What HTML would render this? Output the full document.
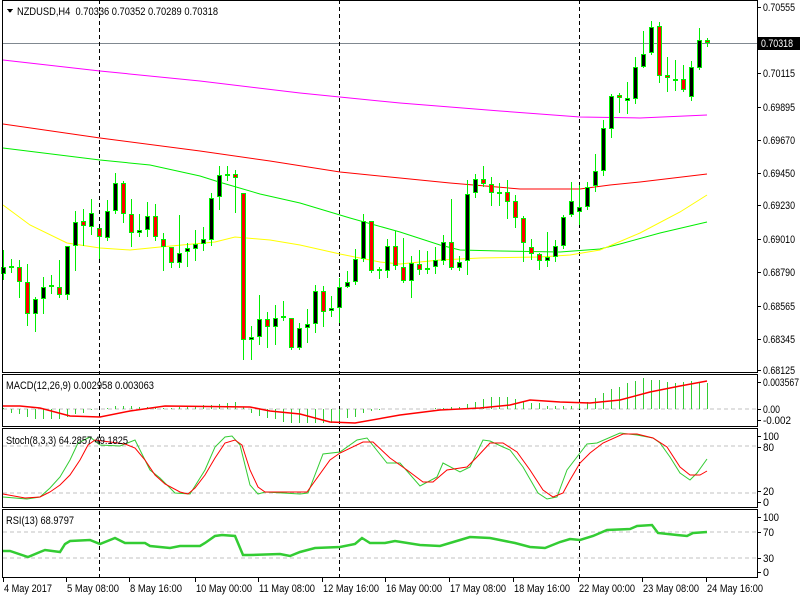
<!DOCTYPE html>
<html><head><meta charset="utf-8"><style>
html,body{margin:0;padding:0;background:#fff;width:800px;height:600px;overflow:hidden}
svg{display:block}
text{font-family:"Liberation Sans",sans-serif;font-size:11px;fill:#000}
</style></head><body>
<svg id="s" width="800" height="600" xmlns="http://www.w3.org/2000/svg" shape-rendering="crispEdges">
<rect width="800" height="600" fill="#fff"/>
<g id="grid"></g>
<g id="ma" fill="none" stroke-width="1.3" shape-rendering="auto"></g>
<g id="cd"></g>
<g id="ind" fill="none" shape-rendering="auto"></g>
<g id="fr" fill="none" stroke="#000"></g>
<g id="tx"></g>
</svg>
<script>
const NS="http://www.w3.org/2000/svg";
function el(p,t,a,txt){const e=document.createElementNS(NS,t);for(const k in a)e.setAttribute(k,a[k]);if(txt!==undefined)e.textContent=txt;document.getElementById(p).appendChild(e);return e;}
function pl(p,pts,c,w){el(p,'polyline',{points:pts.map(q=>q.join(',')).join(' '),stroke:c,'stroke-width':w||1,fill:'none'});}
const G='grid';
[409,446,493,532,558].forEach(y=>el(G,'line',{x1:3,x2:757,y1:y,y2:y,stroke:'#c0c0c0','stroke-dasharray':'4,3'}));
el(G,'line',{x1:3,x2:757,y1:43.5,y2:43.5,stroke:'#808890'});
[99,339,579].forEach(x=>el(G,'line',{x1:x+0.5,x2:x+0.5,y1:0,y2:578,stroke:'#000','stroke-dasharray':'4,3'}));
pl('ma',[[3,60],[100,71],[200,81],[300,93],[400,103],[500,111],[580,117],[640,118],[707,115]],'#ff00ff');
pl('ma',[[3,124],[100,138],[200,151],[270,161],[340,172],[400,178],[450,183],[520,189],[580,189],[610,185],[640,182],[707,174]],'#ff0000');
pl('ma',[[3,148],[100,160],[150,165],[200,176],[219,182],[260,194],[300,203],[350,218],[400,232],[440,245],[460,250],[500,251],[560,252],[600,249],[620,244],[660,233],[707,222]],'#00ee00');
pl('ma',[[3,205],[30,225],[67,243],[100,248],[130,250],[160,247],[215,242],[235,237],[270,240],[300,245],[340,254],[380,262],[400,264],[440,260],[480,258],[540,257],[570,255],[600,250],[640,233],[680,212],[707,195]],'#ffff00');
const C=[[250,267,274,280,'b'],[259,267,267,273,'d'],[260,267,282,298,'r'],[264,282,314,326,'r'],[297,299,314,332,'b'],[277,287,299,314,'b'],[275,286,286,294,'d'],[260,287,295,298,'r'],[246,246,295,300,'b'],[211,222,246,271,'b'],[209,221,226,246,'r'],[199,213,227,235,'b'],[228,228,237,259,'r'],[200,211,238,241,'b'],[173,183,211,214,'b'],[181,183,214,223,'r'],[199,214,233,247,'r'],[214,230,233,237,'b'],[202,216,230,237,'b'],[204,216,237,241,'r'],[233,239,247,271,'r'],[247,247,263,268,'r'],[215,253,263,268,'b'],[243,248,252,267,'b'],[230,244,249,261,'b'],[227,239,244,251,'b'],[193,198,240,246,'b'],[166,175,197,210,'b'],[166,175,175,181,'d'],[170,174,178,213,'r'],[193,193,340,360,'r'],[326,337,340,360,'b'],[295,319,337,345,'b'],[312,319,327,348,'r'],[305,318,327,345,'b'],[301,317,317,321,'d'],[318,318,348,350,'r'],[323,328,348,350,'b'],[309,324,328,343,'b'],[285,291,324,333,'b'],[286,291,312,327,'r'],[296,308,311,317,'b'],[278,287,308,323,'b'],[271,282,287,288,'b'],[249,259,282,285,'b'],[214,221,259,262,'b'],[221,221,271,273,'r'],[267,270,270,279,'d'],[239,246,271,278,'b'],[231,246,266,270,'r'],[238,267,281,283,'r'],[256,263,281,298,'b'],[250,264,270,275,'r'],[251,269,269,274,'d'],[247,260,267,274,'b'],[235,242,261,265,'b'],[199,242,268,270,'r'],[256,262,268,271,'b'],[180,194,261,275,'b'],[174,179,193,198,'b'],[166,179,184,187,'r'],[177,184,193,206,'r'],[183,193,193,206,'d'],[180,192,202,219,'r'],[195,201,218,228,'r'],[216,218,243,262,'r'],[239,247,254,260,'r'],[253,254,261,270,'r'],[232,257,261,267,'b'],[240,246,257,262,'b'],[215,217,246,249,'b'],[182,201,215,217,'b'],[185,207,212,225,'b'],[182,187,207,210,'b'],[154,171,186,192,'b'],[120,128,171,176,'b'],[94,96,129,138,'b'],[93,95,98,113,'r'],[82,98,100,114,'b'],[57,67,99,104,'b'],[31,54,67,68,'b'],[21,27,53,55,'b'],[22,26,76,83,'r'],[57,75,78,92,'r'],[60,80,80,91,'d'],[65,79,90,92,'r'],[61,67,97,101,'b'],[28,40,68,70,'b'],[38,40,43,47,'r']];
C.forEach((c,i)=>{const x=3+8*i;const[h,t,b,l,k]=c;
 el('cd','rect',{x:x,y:h,width:1,height:l-h,fill:'#00ee00'});
 if(k==='d'){el('cd','rect',{x:x-2,y:t-1,width:5,height:2,fill:'#00ee00'});}
 else{el('cd','rect',{x:x-2,y:t,width:5,height:Math.max(b-t,3),fill:'#00ee00'});
  el('cd','rect',{x:x-1,y:t+1,width:3,height:Math.max(b-t-2,1),fill:k==='b'?'#000':'#ff0000'});}
});
const H=[[3,408],[11,413],[19,414],[27,417],[35,419],[43,419],[51,419],[59,419],[67,417],[75,414],[83,413],[91,410],[99,409],[107,408],[115,406],[123,406],[131,406],[139,407],[147,407],[155,407],[163,408],[171,408],[179,407],[187,407],[195,406],[203,405],[211,405],[219,404],[227,403],[235,402],[243,407],[251,413],[259,416],[267,418],[275,419],[283,422],[291,423],[299,423],[307,423],[315,423],[323,423],[331,423],[339,421],[347,418],[355,417],[363,413],[371,411],[379,410],[387,409],[395,409],[403,409],[411,409],[419,409],[427,409],[435,408],[443,408],[451,407],[459,407],[467,404],[475,402],[483,399],[491,397],[499,397],[507,397],[515,399],[523,401],[531,403],[539,403],[547,406],[555,406],[563,406],[571,406],[579,404],[587,402],[595,398],[603,393],[611,389],[619,387],[627,383],[635,381],[643,378],[651,380],[659,380],[667,382],[675,383],[683,382],[691,381],[699,383],[707,383]];
H.forEach(([x,y])=>{const a=Math.min(y,409),b=Math.max(y,409);if(b-a>0)el('cd','rect',{x:x,y:a,width:1,height:b-a,fill:'#33cc33'});});
pl('ind',[[3,406],[20,406],[40,408],[70,416],[100,417],[130,411],[165,406],[250,407],[270,411],[300,414],[330,422],[355,423],[400,415],[440,410],[480,408],[510,405],[530,400],[560,402],[590,403],[620,400],[650,392],[680,386],[707,381]],'#ff0000',1.5);
pl('ind',[[3,497],[15,498],[27,499],[40,497],[50,488],[60,477],[70,460],[78,443],[90,437],[100,445],[120,446],[135,440],[150,470],[160,478],[175,493],[190,494],[205,470],[215,447],[225,437],[232,436],[240,445],[250,485],[258,494],[265,492],[300,494],[308,493],[323,454],[340,452],[357,440],[367,438],[387,463],[400,463],[420,486],[437,477],[443,463],[460,472],[470,467],[483,440],[490,441],[503,447],[510,450],[523,467],[538,493],[547,499],[557,497],[567,470],[580,453],[587,444],[597,443],[620,433],[637,435],[653,438],[660,443],[670,457],[680,473],[690,480],[697,473],[707,459]],'#33cc33',1);
pl('ind',[[3,494],[25,498],[40,497],[50,492],[60,485],[70,475],[80,460],[88,445],[95,440],[125,444],[135,448],[145,460],[155,475],[165,484],[180,492],[188,494],[195,488],[205,475],[215,458],[225,443],[235,440],[242,445],[250,470],[258,487],[265,492],[307,492],[330,460],[340,453],[363,442],[373,442],[390,458],[407,470],[423,482],[433,482],[447,470],[467,467],[477,457],[490,443],[503,443],[517,452],[530,470],[543,490],[553,497],[563,493],[570,480],[580,463],[590,453],[603,443],[623,434],[637,434],[653,438],[667,447],[680,467],[690,475],[700,475],[707,471]],'#ff0000',1);
pl('ind',[[3,551],[10,551],[28,557],[40,552],[45,550],[60,552],[65,544],[70,541],[90,540],[100,544],[115,538],[125,543],[145,543],[150,546],[170,548],[180,546],[200,546],[205,543],[215,536],[222,535],[235,536],[243,555],[250,555],[280,554],[290,556],[300,552],[315,548],[340,547],[355,544],[362,538],[370,543],[385,543],[395,541],[420,545],[440,546],[460,540],[470,537],[490,538],[515,543],[530,547],[545,548],[560,542],[570,539],[580,540],[593,536],[607,530],[630,529],[637,526],[652,525],[658,533],[677,535],[687,536],[693,533],[707,532]],'#33cc33',2.5);
[[2.5,0.5,755,372],[2.5,374.5,755,52],[2.5,428.5,755,79],[2.5,509.5,755,68]].forEach(r=>el('fr','rect',{x:r[0],y:r[1],width:r[2],height:r[3]}));
function T(x,y,t,len,extra){const a={x:x,y:y};if(len){a.textLength=len;a.lengthAdjust='spacingAndGlyphs';}if(extra)Object.assign(a,extra);return el('tx','text',a,t);}
const P=[['0.70555',7],['0.70115',73],['0.69895',107],['0.69670',140],['0.69450',173],['0.69230',205],['0.69010',239],['0.68790',272],['0.68565',306],['0.68345',339],['0.68125',370],
['0.003567',382],['0.00',409],['-0.002',420],['100',436],['80',447],['20',491],['0',502],['100',517],['70',532],['30',558],['0',572]];
P.forEach(([t,y])=>{el('tx','line',{x1:757,x2:761,y1:y+0.5,y2:y+0.5,stroke:'#000'});
 const L={7:32,8:36,6:28,4:17,3:16,2:11,1:6}[t.length];T(763,y+4,t,L);});
el('tx','rect',{x:757,y:37,width:43,height:13,fill:'#000'});
T(761,47,'0.70318',32,{style:'fill:#fff'});
[['4 May 2017',3],['5 May 08:00',66],['8 May 16:00',129],['10 May 00:00',195],['11 May 08:00',258],['12 May 16:00',322],['16 May 00:00',385],['17 May 08:00',449],['18 May 16:00',513],['22 May 00:00',578],['23 May 08:00',642],['24 May 16:00',706]].forEach(([t,x])=>{el('tx','line',{x1:x+0.5,x2:x+0.5,y1:578,y2:582,stroke:'#000'});
 const L=t.length===10?48:(t.length===11?52:56);T(x+1,592,t,L);});
el('tx','path',{d:'M7 9 L13 9 L10 13 Z',fill:'#000'});
T(17,15,'NZDUSD,H4\u00a0\u00a00.70336 0.70352 0.70289 0.70318',201);
T(6,389,'MACD(12,26,9) 0.002958 0.003063',148);
T(6,444,'Stoch(8,3,3) 64.2857 49.1825',122);
T(6,524,'RSI(13) 68.9797',68);
</script>
</body></html>
